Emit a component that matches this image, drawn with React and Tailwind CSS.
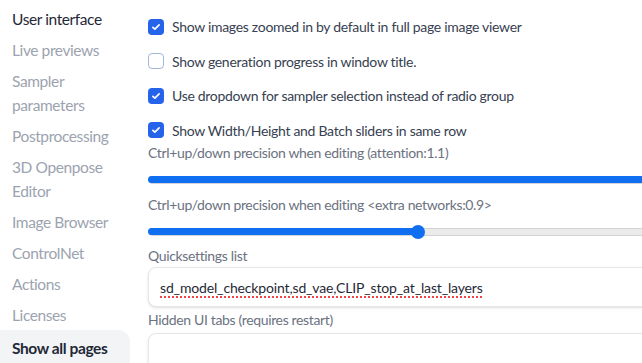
const navItems = [
  { label: "User interface", active: true },
  { label: "Live previews" },
  { label: "Sampler parameters" },
  { label: "Postprocessing" },
  { label: "3D Openpose Editor" },
  { label: "Image Browser" },
  { label: "ControlNet" },
  { label: "Actions" },
  { label: "Licenses" },
];

const checks = [
  { label: "Show progressbar on page in the window title", checked: true },
  { label: "Show images zoomed in by default in full page image viewer", checked: true },
  { label: "Show generation progress in window title.", checked: false },
  { label: "Use dropdown for sampler selection instead of radio group", checked: true },
  { label: "Show Width/Height and Batch sliders in same row", checked: true },
];

const Checkbox = ({ checked }) => (
  <span
    className={
      checked
        ? "flex h-4 w-4 shrink-0 items-center justify-center rounded-[4px] bg-[#2563eb]"
        : "flex h-4 w-4 shrink-0 items-center justify-center rounded-[4px] border border-[#a3b6d6] bg-white"
    }
  >
    {checked && (
      <svg width="10" height="10" viewBox="0 0 16 16" fill="none">
        <path
          d="M3 8.5l3.2 3L13 4.5"
          stroke="white"
          strokeWidth="2.6"
          strokeLinecap="round"
          strokeLinejoin="round"
        />
      </svg>
    )}
  </span>
);

const Slider = ({ pct }) => (
  <div className="relative h-4 w-full">
    <div className="absolute left-0 right-0 top-[4px] h-[8px] rounded-full border border-[#d4d4d8] bg-[#ebebeb]" />
    <div
      className="absolute left-0 top-[4px] h-[7px] rounded-l-full bg-[#0f6ff0]"
      style={{ width: pct + "px" }}
    />
    {pct < 600 && (
      <div
        className="absolute top-[1px] h-[14px] w-[14px] rounded-full bg-[#0f6ff0]"
        style={{ left: pct - 7 + "px" }}
      />
    )}
  </div>
);

export default function App() {
  return (
    <div
      className="flex h-[363px] w-[642px] overflow-hidden bg-white"
      style={{ fontFamily: "Lato, 'Noto Sans', sans-serif" }}
    >
      <aside className="flex w-[130px] shrink-0 flex-col pt-[3px]">
        {navItems.map((item) => (
          <div
            key={item.label}
            className={
              item.active
                ? "px-3 py-[3.5px] text-[15.5px] leading-6 tracking-[-0.4px] text-[#1f2937]"
                : "px-3 py-[3.5px] text-[15.5px] leading-6 tracking-[-0.4px] text-[#9ca3af]"
            }
          >
            {item.label}
          </div>
        ))}
        <div className="mt-[0px] flex-1 rounded-tr-xl bg-[#f3f4f6] px-3 pt-[6px] text-[15.5px] font-bold leading-6 tracking-[-0.4px] text-[#1f2937]">
          Show all pages
        </div>
      </aside>

      <main className="mt-[-18px] w-[700px] shrink-0 pl-[18px]">
        <div className="flex flex-col gap-[14.6px]">
          {checks.map((c) => (
            <label
              key={c.label}
              className="flex h-5 items-center gap-2 text-[14px] tracking-[-0.3px] text-[#374151]"
            >
              <Checkbox checked={c.checked} />
              <span>{c.label}</span>
            </label>
          ))}
        </div>

        <div className="mt-[3px] text-[14px] leading-5 tracking-[-0.35px] text-[#6b7280]">
          Ctrl+up/down precision when editing (attention:1.1)
        </div>
        <div className="mt-[9px]">
          <Slider pct={700} />
        </div>

        <div className="mt-[7px] text-[14px] leading-5 tracking-[-0.35px] text-[#6b7280]">
          Ctrl+up/down precision when editing &lt;extra networks:0.9&gt;
        </div>
        <div className="mt-[9px]">
          <Slider pct={270} />
        </div>

        <div className="mt-[6px] text-[14px] leading-5 tracking-[-0.35px] text-[#6b7280]">
          Quicksettings list
        </div>
        <div className="mt-[1px] flex h-[40px] items-center rounded-lg border border-[#e5e7eb] bg-white px-[11px] shadow-sm">
          <span className="text-[14px] tracking-[-0.15px] text-[#1f2937] underline decoration-[#ef4444] decoration-dotted decoration-[1.5px] underline-offset-[4px]">
            sd_model_checkpoint,sd_vae,CLIP_stop_at_last_layers
          </span>
        </div>

        <div className="mt-[3px] text-[14px] leading-5 tracking-[-0.35px] text-[#6b7280]">
          Hidden UI tabs (requires restart)
        </div>
        <div className="mt-[3px] h-[40px] rounded-lg border border-[#e5e7eb] bg-white shadow-sm" />
      </main>
    </div>
  );
}
